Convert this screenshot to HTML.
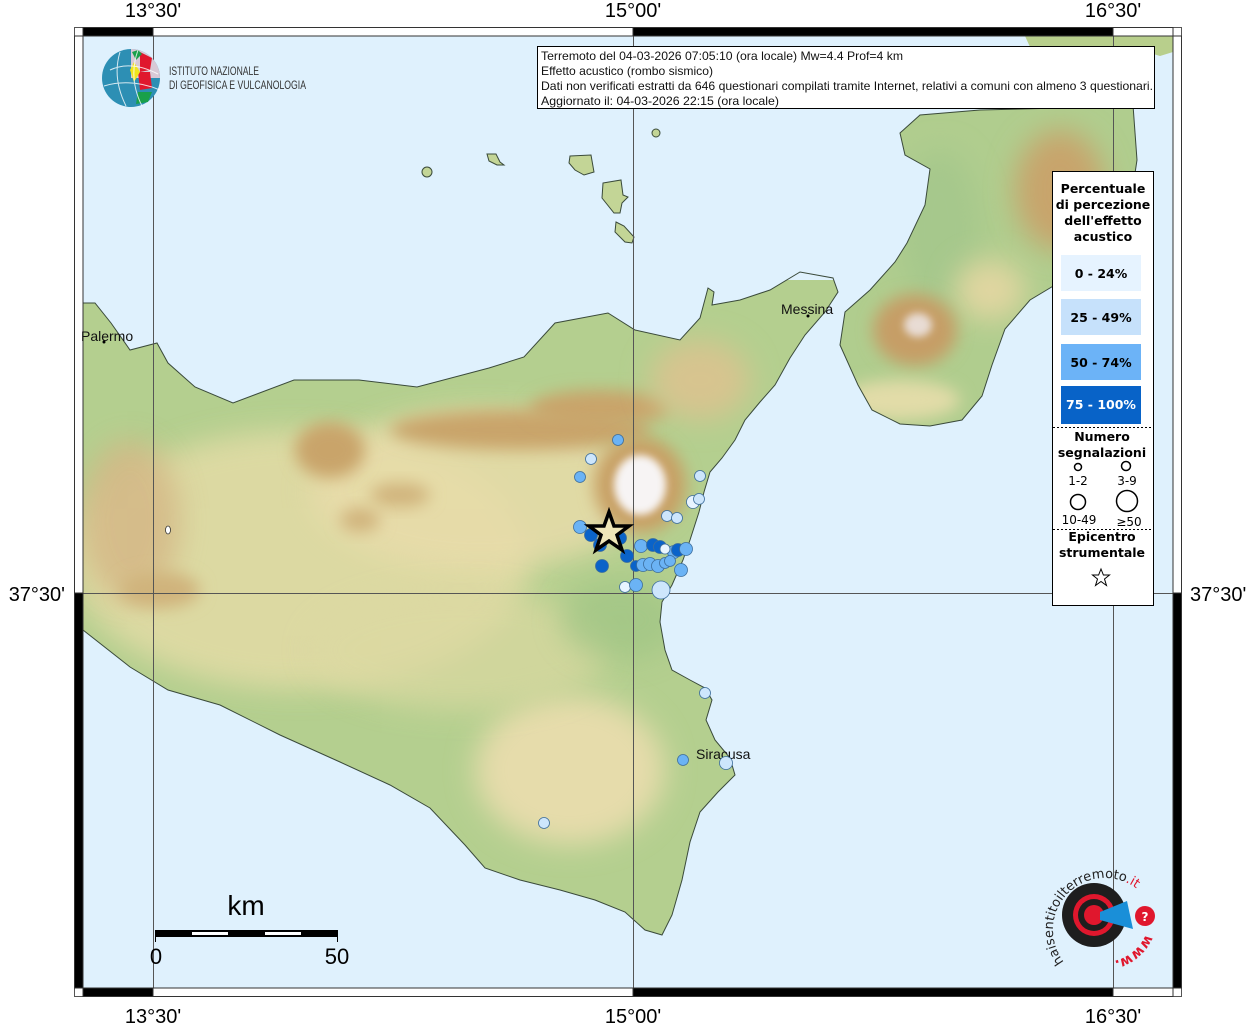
<!DOCTYPE html>
<html><head><meta charset="utf-8"><style>
html,body{margin:0;padding:0;background:#fff;}
body{width:1255px;height:1024px;overflow:hidden;position:relative;font-family:"Liberation Sans",sans-serif;}
</style></head><body>
<svg width="1255" height="1024" viewBox="0 0 1255 1024" xmlns="http://www.w3.org/2000/svg" style="position:absolute;left:0;top:0">
<defs>
<filter id="b8" x="-50%" y="-50%" width="200%" height="200%"><feGaussianBlur stdDeviation="8"/></filter>
<filter id="b14" x="-50%" y="-50%" width="200%" height="200%"><feGaussianBlur stdDeviation="14"/></filter>
<filter id="b4" x="-50%" y="-50%" width="200%" height="200%"><feGaussianBlur stdDeviation="4"/></filter>
<clipPath id="sic"><path id="sicp" d="M83,303 L95,303 L111,323 L130,350 L157,343 L168,363 L195,387 L233,403 L294,380 L359,380 L417,387 L489,368 L524,357 L555,323 L608,313 L635,330 L680,340 L700,318 L708,288 L714,292 L712,305 L740,300 L770,290 L800,272 L833,278 L838,292 L825,312 L805,335 L790,358 L775,385 L760,402 L745,420 L735,440 L722,458 L710,472 L704,492 L699,512 L690,540 L683,560 L672,585 L662,602 L660,622 L665,650 L672,670 L690,680 L705,688 L712,700 L706,720 L715,740 L730,758 L735,775 L718,792 L700,812 L690,842 L682,880 L672,915 L662,935 L645,930 L625,912 L595,900 L560,890 L520,880 L485,868 L465,845 L430,808 L390,785 L340,762 L280,735 L220,705 L168,690 L130,667 L83,630 Z"/></clipPath>
<clipPath id="cal"><path id="calp" d="M900,133 L920,115 L980,110 L1060,108 L1133,105 L1137,160 L1125,240 L1060,282 L1030,300 L1005,329 L992,365 L982,396 L962,420 L930,426 L900,424 L872,410 L858,385 L840,345 L845,312 L870,290 L895,262 L907,243 L925,205 L930,169 L905,155 Z"/></clipPath>
<clipPath id="cal2"><path id="cal2p" d="M1025,36 L1173,36 L1173,52 L1160,56 L1140,50 L1100,48 L1060,48 L1030,47 Z"/></clipPath>
</defs>
<rect x="74.5" y="27.5" width="1107" height="969" fill="#fff" stroke="#555" stroke-width="1"/>
<rect x="83" y="36" width="1090" height="952" fill="#dff1fd"/>
<g clip-path="url(#sic)">
<rect x="83" y="280" width="760" height="670" fill="#b4cf8f"/>
<ellipse cx="300" cy="560" rx="230" ry="130" fill="#e3dba6" filter="url(#b14)" opacity="0.85"/>
<ellipse cx="480" cy="490" rx="170" ry="80" fill="#e8dcaa" filter="url(#b14)" opacity="0.85"/>
<ellipse cx="570" cy="770" rx="95" ry="75" fill="#e6dcab" filter="url(#b14)"/>
<ellipse cx="460" cy="650" rx="150" ry="60" fill="#dcd9a2" filter="url(#b14)" opacity="0.7"/>
<ellipse cx="130" cy="520" rx="50" ry="80" fill="#d4b886" filter="url(#b14)" opacity="0.85"/>
<ellipse cx="520" cy="430" rx="130" ry="20" fill="#c9a46a" filter="url(#b8)"/>
<ellipse cx="600" cy="408" rx="70" ry="18" fill="#c9a46a" filter="url(#b8)"/>
<ellipse cx="330" cy="450" rx="35" ry="28" fill="#c9a46a" filter="url(#b8)"/>
<ellipse cx="400" cy="495" rx="30" ry="12" fill="#d0b37b" filter="url(#b8)"/>
<ellipse cx="360" cy="520" rx="20" ry="12" fill="#d0b37b" filter="url(#b8)"/>
<ellipse cx="160" cy="590" rx="40" ry="18" fill="#d0b37b" filter="url(#b8)"/>
<ellipse cx="700" cy="380" rx="50" ry="40" fill="#d7c48f" filter="url(#b14)"/>
<ellipse cx="640" cy="485" rx="46" ry="48" fill="#c8a065" filter="url(#b8)"/>
<ellipse cx="640" cy="485" rx="26" ry="30" fill="#f7f4f4" filter="url(#b4)"/>
<ellipse cx="620" cy="620" rx="60" ry="40" fill="#9fc584" filter="url(#b14)" opacity="0.7"/>
</g>
<use href="#sicp" fill="none" stroke="#3a4a3a" stroke-width="1"/>
<g clip-path="url(#cal)">
<rect x="830" y="100" width="320" height="340" fill="#b0cd8e"/>
<ellipse cx="940" cy="230" rx="40" ry="80" fill="#a6c88c" filter="url(#b14)"/>
<ellipse cx="1060" cy="190" rx="45" ry="60" fill="#c8a46c" filter="url(#b14)"/>
<ellipse cx="990" cy="290" rx="35" ry="30" fill="#e0d6a0" filter="url(#b14)"/>
<ellipse cx="915" cy="330" rx="42" ry="36" fill="#c69e66" filter="url(#b8)"/>
<ellipse cx="918" cy="325" rx="14" ry="12" fill="#e8dcd4" filter="url(#b4)"/>
<ellipse cx="900" cy="400" rx="60" ry="20" fill="#e2dca8" filter="url(#b8)"/>
</g>
<use href="#calp" fill="none" stroke="#3a4a3a" stroke-width="1"/>
<g clip-path="url(#cal2)"><rect x="1020" y="36" width="160" height="22" fill="#b8cf8c"/></g>
<g fill="#c3d596" stroke="#3a4a3a" stroke-width="1">
<ellipse cx="427" cy="172" rx="5" ry="5"/>
<path d="M487,154 L496,154 L500,162 L504,165 L497,165 L489,161 Z"/>
<path d="M570,156 L591,155 L594,172 L584,175 L575,170 L569,163 Z"/>
<path d="M603,183 L621,180 L623,195 L628,197 L622,203 L620,213 L614,213 L602,198 Z"/>
<path d="M616,222 L624,226 L634,237 L632,243 L625,242 L615,232 Z"/>
<ellipse cx="656" cy="133" rx="4" ry="4"/>
</g>
<ellipse cx="168" cy="530" rx="2.5" ry="4" fill="#fff" stroke="#333" stroke-width="0.8"/>
<g stroke="#555" stroke-width="1">
<line x1="153.5" y1="36" x2="153.5" y2="988"/>
<line x1="633.5" y1="36" x2="633.5" y2="988"/>
<line x1="1113.5" y1="36" x2="1113.5" y2="988"/>
<line x1="83" y1="593.5" x2="1173" y2="593.5"/>
</g>
<g stroke="#333" stroke-width="1">
<rect x="83" y="27.5" width="70" height="8.5" fill="#000"/>
<rect x="153" y="27.5" width="480" height="8.5" fill="#fff"/>
<rect x="633" y="27.5" width="480" height="8.5" fill="#000"/>
<rect x="1113" y="27.5" width="60" height="8.5" fill="#fff"/>
<rect x="83" y="988" width="70" height="8.5" fill="#000"/>
<rect x="153" y="988" width="480" height="8.5" fill="#fff"/>
<rect x="633" y="988" width="480" height="8.5" fill="#000"/>
<rect x="1113" y="988" width="60" height="8.5" fill="#fff"/>
<rect x="74.5" y="36" width="8.5" height="557" fill="#fff"/>
<rect x="74.5" y="593" width="8.5" height="395" fill="#000"/>
<rect x="1173" y="36" width="8.5" height="557" fill="#fff"/>
<rect x="1173" y="593" width="8.5" height="395" fill="#000"/>
</g>
<g font-family="Liberation Sans, sans-serif" font-size="20" fill="#000">
<text x="153" y="17" text-anchor="middle">13°30'</text>
<text x="633" y="17" text-anchor="middle">15°00'</text>
<text x="1113" y="17" text-anchor="middle">16°30'</text>
<text x="153" y="1023" text-anchor="middle">13°30'</text>
<text x="633" y="1023" text-anchor="middle">15°00'</text>
<text x="1113" y="1023" text-anchor="middle">16°30'</text>
<text x="65" y="601" text-anchor="end">37°30'</text>
<text x="1190" y="601">37°30'</text>
</g>
<g font-family="Liberation Sans, sans-serif" font-size="14" fill="#111">
<text x="81" y="341">Palermo</text><circle cx="104" cy="342" r="1.5" fill="#000"/>
<text x="781" y="314">Messina</text><circle cx="808" cy="316" r="1.5" fill="#000"/>
<text x="696" y="759">Siracusa</text><circle cx="722" cy="760" r="1.5" fill="#000"/>
</g>
<g stroke="#3c6d9c" stroke-width="0.8">
<circle cx="618" cy="440" r="5.5" fill="#6bb3f5"/>
<circle cx="591" cy="459" r="5.5" fill="#cde6fc"/>
<circle cx="580" cy="477" r="5.5" fill="#6bb3f5"/>
<circle cx="700" cy="476" r="5.5" fill="#cde6fc"/>
<circle cx="693" cy="502" r="6.5" fill="#e8f4ff"/>
<circle cx="699" cy="499" r="5.5" fill="#cde6fc"/>
<circle cx="667" cy="516" r="5.5" fill="#cde6fc"/>
<circle cx="677" cy="518" r="5.5" fill="#cde6fc"/>
<circle cx="580" cy="527" r="6.5" fill="#6bb3f5"/>
<circle cx="591" cy="535" r="6.5" fill="#0a63c9"/>
<circle cx="600" cy="545" r="6.5" fill="#0a63c9"/>
<circle cx="620" cy="538" r="6.5" fill="#0a63c9"/>
<circle cx="627" cy="556" r="6.5" fill="#0a63c9"/>
<circle cx="641" cy="546" r="6.5" fill="#6bb3f5"/>
<circle cx="653" cy="545" r="6.5" fill="#0a63c9"/>
<circle cx="660" cy="547" r="6.5" fill="#0a63c9"/>
<circle cx="674" cy="552" r="6.5" fill="#6bb3f5"/>
<circle cx="678" cy="550" r="6.5" fill="#0a63c9"/>
<circle cx="686" cy="549" r="6.5" fill="#6bb3f5"/>
<circle cx="665" cy="549" r="5" fill="#e8f4ff"/>
<circle cx="636" cy="566" r="5.5" fill="#0a63c9"/>
<circle cx="643" cy="565" r="6.5" fill="#6bb3f5"/>
<circle cx="650" cy="564" r="6.5" fill="#6bb3f5"/>
<circle cx="658" cy="566" r="6.5" fill="#6bb3f5"/>
<circle cx="665" cy="563" r="5.5" fill="#6bb3f5"/>
<circle cx="670" cy="561" r="5.5" fill="#6bb3f5"/>
<circle cx="681" cy="570" r="6.5" fill="#6bb3f5"/>
<circle cx="602" cy="566" r="6.5" fill="#0a63c9"/>
<circle cx="625" cy="587" r="5.5" fill="#e8f4ff"/>
<circle cx="636" cy="585" r="6.5" fill="#6bb3f5"/>
<circle cx="661" cy="590" r="9" fill="#cde6fc"/>
<circle cx="705" cy="693" r="5.5" fill="#cde6fc"/>
<circle cx="683" cy="760" r="5.5" fill="#6bb3f5"/>
<circle cx="726" cy="763" r="6.5" fill="#cde6fc"/>
<circle cx="544" cy="823" r="5.5" fill="#cde6fc"/>
</g>
<path d="M609,512 L614,526 L629,526 L617,535 L622,550 L609,541 L596,550 L601,535 L589,526 L604,526 Z" fill="#efe6b8" stroke="#000" stroke-width="3.5" stroke-linejoin="miter"/>
<rect x="537.5" y="46.5" width="617" height="62" fill="#fff" stroke="#000"/>
<g font-family="Liberation Sans, sans-serif" font-size="12" fill="#111">
<text x="541" y="60" textLength="362" lengthAdjust="spacingAndGlyphs">Terremoto del 04-03-2026 07:05:10 (ora locale) Mw=4.4 Prof=4 km</text>
<text x="541" y="75" textLength="172" lengthAdjust="spacingAndGlyphs">Effetto acustico (rombo sismico)</text>
<text x="541" y="90" textLength="612" lengthAdjust="spacingAndGlyphs">Dati non verificati estratti da 646 questionari compilati tramite Internet, relativi a comuni con almeno 3 questionari.</text>
<text x="541" y="105" textLength="238" lengthAdjust="spacingAndGlyphs">Aggiornato il: 04-03-2026 22:15 (ora locale)</text>
</g>
<rect x="1052.5" y="171.5" width="101" height="434" fill="#fff" stroke="#000"/>
<g font-family="DejaVu Sans, sans-serif" font-size="12.5" font-weight="bold" fill="#000" text-anchor="middle">
<text x="1103" y="193">Percentuale</text>
<text x="1103" y="209">di percezione</text>
<text x="1103" y="225">dell'effetto</text>
<text x="1103" y="241">acustico</text>
<rect x="1061" y="255" width="80" height="36" fill="#e6f3ff"/>
<text x="1101" y="278">0 - 24%</text>
<rect x="1061" y="299" width="80" height="36" fill="#c6e1fb"/>
<text x="1101" y="322">25 - 49%</text>
<rect x="1061" y="344" width="80" height="36" fill="#6cb3f7"/>
<text x="1101" y="367">50 - 74%</text>
<rect x="1061" y="386" width="80" height="38" fill="#0863c8"/>
<text x="1101" y="409" fill="#fff">75 - 100%</text>
<line x1="1053" y1="427.5" x2="1153" y2="427.5" stroke="#000" stroke-dasharray="2,2"/>
<text x="1102" y="441">Numero</text>
<text x="1102" y="457">segnalazioni</text>
<line x1="1053" y1="529.5" x2="1153" y2="529.5" stroke="#000" stroke-dasharray="2,2"/>
<text x="1102" y="541">Epicentro</text>
<text x="1102" y="557">strumentale</text>
</g>
<g fill="none" stroke="#000" stroke-width="1.5">
<circle cx="1078" cy="467" r="3.5"/><circle cx="1126" cy="466" r="4.5"/>
<circle cx="1078" cy="502" r="7.5"/><circle cx="1127" cy="501" r="10.5"/>
</g>
<g font-family="DejaVu Sans, sans-serif" font-size="12" fill="#000" text-anchor="middle">
<text x="1078" y="485">1-2</text><text x="1127" y="485">3-9</text>
<text x="1079" y="524">10-49</text><text x="1129" y="526">≥50</text>
</g>
<path d="M1101,569 L1103.4,575 L1109.5,575 L1104.5,579 L1106.5,585.5 L1101,581.5 L1095.5,585.5 L1097.5,579 L1092.5,575 L1098.6,575 Z" fill="#fff" stroke="#000" stroke-width="1"/>
<g>
<circle cx="131" cy="78" r="29" fill="#2d8fb4"/>
<path d="M131,49 A29,29 0 0 1 160,78 L131,78 Z" fill="#d8c9d6"/>
<path d="M140,52 L152,58 L150,70 L140,72 Z" fill="#e0172d"/>
<path d="M138,72 L150,72 L152,88 L140,90 Z" fill="#e0172d"/>
<path d="M136,60 L142,54 L138,50 L132,52 Z" fill="#19a04a"/>
<path d="M134,62 L140,72 L134,82 L130,70 Z" fill="#f0e41d"/>
<path d="M138,92 L152,92 L148,102 L136,104 Z" fill="#19a04a"/>
<path d="M110,70 Q131,60 158,74 M104,86 Q131,78 160,90 M120,52 Q112,78 126,106 M138,50 Q128,78 142,106" stroke="#fff" stroke-width="1" fill="none" opacity="0.8"/>
<text x="169" y="75" font-family="Liberation Sans, sans-serif" font-size="12" fill="#333" textLength="90" lengthAdjust="spacingAndGlyphs">ISTITUTO NAZIONALE</text>
<text x="169" y="89" font-family="Liberation Sans, sans-serif" font-size="12" fill="#333" textLength="137" lengthAdjust="spacingAndGlyphs">DI GEOFISICA E VULCANOLOGIA</text>
</g>
<text x="246" y="915" font-family="Liberation Sans, sans-serif" font-size="28" text-anchor="middle">km</text>
<rect x="155.5" y="930.5" width="182" height="6" fill="#000" stroke="#000"/>
<rect x="192" y="932" width="36" height="3" fill="#fff"/>
<rect x="265" y="932" width="36" height="3" fill="#fff"/>
<line x1="155.5" y1="930" x2="155.5" y2="942" stroke="#000"/>
<line x1="337.5" y1="930" x2="337.5" y2="942" stroke="#000"/>
<text x="156" y="964" font-family="Liberation Sans, sans-serif" font-size="22" text-anchor="middle">0</text>
<text x="337" y="964" font-family="Liberation Sans, sans-serif" font-size="22" text-anchor="middle">50</text>
<g>
<defs><path id="arc" d="M1064,962 A46,46 0 1 1 1146,898"/><path id="arc2" d="M1146,934 A46,46 0 0 1 1100,962"/></defs>
<circle cx="1094" cy="915" r="32" fill="#1e1e1e"/>
<circle cx="1094" cy="915" r="21" fill="#e0172d"/>
<circle cx="1094" cy="915" r="16" fill="#1e1e1e"/>
<circle cx="1094" cy="915" r="10" fill="#e0172d"/>
<path d="M1100,912 L1127,901 L1133,929 L1100,920 Z" fill="#1a8fd8"/>
<circle cx="1145" cy="916" r="10" fill="#e0172d"/>
<text x="1145" y="921" font-size="12" font-weight="bold" fill="#fff" text-anchor="middle" font-family="DejaVu Sans, sans-serif">?</text>
<text font-family="DejaVu Sans, sans-serif" font-size="13" fill="#222"><textPath href="#arc">haisentitoilterremoto<tspan fill="#e0172d">.it</tspan></textPath></text>
<text font-family="DejaVu Sans, sans-serif" font-size="14" font-weight="bold" fill="#e0172d"><textPath href="#arc2">www.</textPath></text>
</g>
</svg>
</body></html>
